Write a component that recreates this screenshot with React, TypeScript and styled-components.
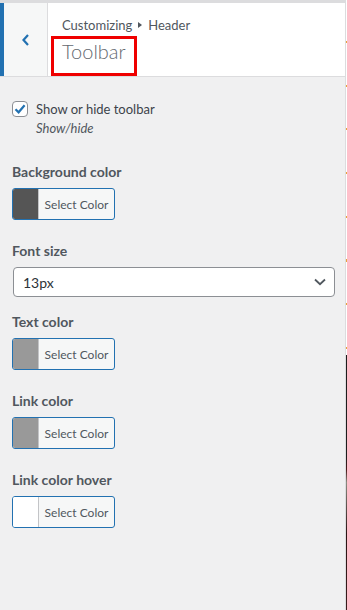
import React from "react";
import styled, { createGlobalStyle } from "styled-components";

const Global = createGlobalStyle`
  html, body { margin: 0; padding: 0; }
  body { font-family: Lato, "Noto Sans", sans-serif; background: #f0f0f1; }
  * { box-sizing: border-box; }
`;

const Page = styled.div`
  display: flex;
  width: 347px;
  height: 610px;
  overflow: hidden;
`;

const Sidebar = styled.div`
  width: 346px;
  flex: none;
  display: flex;
  flex-direction: column;
  background: #f0f0f1;
  border-right: 1px solid #dcdcde;
`;

const Preview = styled.div`
  flex: 1;
  display: flex;
  flex-direction: column;
`;

const PreviewTop = styled.div`
  height: 355px;
  background: #fff repeating-linear-gradient(
    to bottom,
    transparent 0 41px,
    #e8a23c 41px 43px,
    transparent 43px 43.7px
  );
`;

const PreviewBottom = styled.div`
  flex: 1;
  background: linear-gradient(to bottom, #1d1d1d 0 40%, #4a1a1a 45%, #8a8a80 50%, #2b1414 70%, #3a1c1c 100%);
`;

const Header = styled.div`
  display: flex;
  height: 77px;
  background: #fff;
  border-top: 3px solid #dcdcde;
  border-bottom: 1px solid #dcdcde;
`;

const BackButton = styled.button`
  width: 48px;
  flex: none;
  display: flex;
  align-items: center;
  justify-content: center;
  background: #f6f7f7;
  border: none;
  border-left: 4px solid #2271b1;
  border-right: 1px solid #dcdcde;
  padding: 0;
  color: #2271b1;
`;

const Titles = styled.div`
  display: flex;
  flex-direction: column;
  padding: 13px 0 0 14px;
`;

const Crumb = styled.div`
  font-size: 13px;
  color: #50575e;
  line-height: 18px;
  display: flex;
  align-items: center;
  gap: 5px;
`;

const Arrow = styled.span`
  display: inline-block;
  width: 0;
  height: 0;
  border-top: 3px solid transparent;
  border-bottom: 3px solid transparent;
  border-left: 4px solid #50575e;
  margin: 0 1px;
`;

const TitleBox = styled.div`
  margin: 2px 0 0 -11px;
  width: 86px;
  height: 40px;
  border: 3px solid #ef0000;
  padding: 0 0 0 8px;
  font-size: 20px;
  font-weight: 300;
  color: #646970;
  line-height: 24px;
`;

const Body = styled.div`
  display: flex;
  flex-direction: column;
  padding: 21px 12px 0 12px;
`;

const CheckRow = styled.label`
  display: flex;
  align-items: center;
  gap: 8px;
  font-size: 13px;
  color: #3c434a;
  line-height: 20px;
  padding-top: 1px;
`;

const Box = styled.span`
  width: 16px;
  height: 16px;
  border: 1px solid #8c8f94;
  border-radius: 4px;
  background: #fff;
  display: flex;
  align-items: center;
  justify-content: center;
`;

const Description = styled.div`
  font-size: 13px;
  font-style: italic;
  color: #50575e;
  margin: 0 0 0 24px;
  line-height: 18px;
`;

const Control = styled.div<{ $top: number }>`
  margin-top: ${(p) => p.$top}px;
  display: flex;
  flex-direction: column;
`;

const Label = styled.div`
  font-size: 14px;
  font-weight: 700;
  color: #50575e;
  line-height: 20px;
  margin-bottom: 6px;
`;

const ColorButton = styled.button`
  display: flex;
  align-items: stretch;
  width: 103px;
  height: 32px;
  padding: 0;
  border: 1px solid #2271b1;
  border-radius: 3px;
  background: #f6f7f7;
  overflow: hidden;
  font-family: inherit;
  cursor: pointer;
`;

const Swatch = styled.span<{ $color: string }>`
  width: 26px;
  flex: none;
  background: ${(p) => p.$color};
  border-right: 1px solid #c3c4c7;
`;

const ButtonText = styled.span`
  flex: 1;
  display: flex;
  align-items: center;
  justify-content: center;
  font-size: 12px;
  color: #50575e;
`;

const Select = styled.div`
  width: 322px;
  height: 30px;
  margin-left: 1px;
  border: 1px solid #8c8f94;
  border-radius: 4px;
  background: #fff;
  display: flex;
  align-items: center;
  justify-content: space-between;
  padding: 0 7px 0 9px;
  font-size: 14px;
  color: #2c3338;
`;

const ColorControl = ({ label, color, top }: { label: string; color: string; top: number }) => (
  <Control $top={top}>
    <Label>{label}</Label>
    <ColorButton>
      <Swatch $color={color} />
      <ButtonText>Select Color</ButtonText>
    </ColorButton>
  </Control>
);

export default function App() {
  return (
    <Page>
      <Global />
      <Sidebar>
        <Header>
          <BackButton>
            <svg width="12" height="14" viewBox="0 0 12 14">
              <path d="M8 2 L3.5 7 L8 12" fill="none" stroke="#2271b1" strokeWidth="2.2" />
            </svg>
          </BackButton>
          <Titles>
            <Crumb>
              Customizing <Arrow /> Header
            </Crumb>
            <TitleBox>Toolbar</TitleBox>
          </Titles>
        </Header>
        <Body>
          <CheckRow>
            <Box>
              <svg width="14" height="14" viewBox="0 0 14 14">
                <path d="M2.5 7.2 L5.6 10.3 L11.6 3.2" fill="none" stroke="#2271b1" strokeWidth="2.2" />
              </svg>
            </Box>
            Show or hide toolbar
          </CheckRow>
          <Description>Show/hide</Description>
          <ColorControl label="Background color" color="#555555" top={25} />
          <Control $top={21}>
            <Label>Font size</Label>
            <Select>
              13px
              <svg width="14" height="10" viewBox="0 0 14 10">
                <path d="M2 2.5 L7 7.2 L12 2.5" fill="none" stroke="#50575e" strokeWidth="1.8" />
              </svg>
            </Select>
          </Control>
          <ColorControl label="Text color" color="#999999" top={15} />
          <ColorControl label="Link color" color="#999999" top={21} />
          <ColorControl label="Link color hover" color="#ffffff" top={21} />
        </Body>
      </Sidebar>
      <Preview>
        <PreviewTop />
        <PreviewBottom />
      </Preview>
    </Page>
  );
}
